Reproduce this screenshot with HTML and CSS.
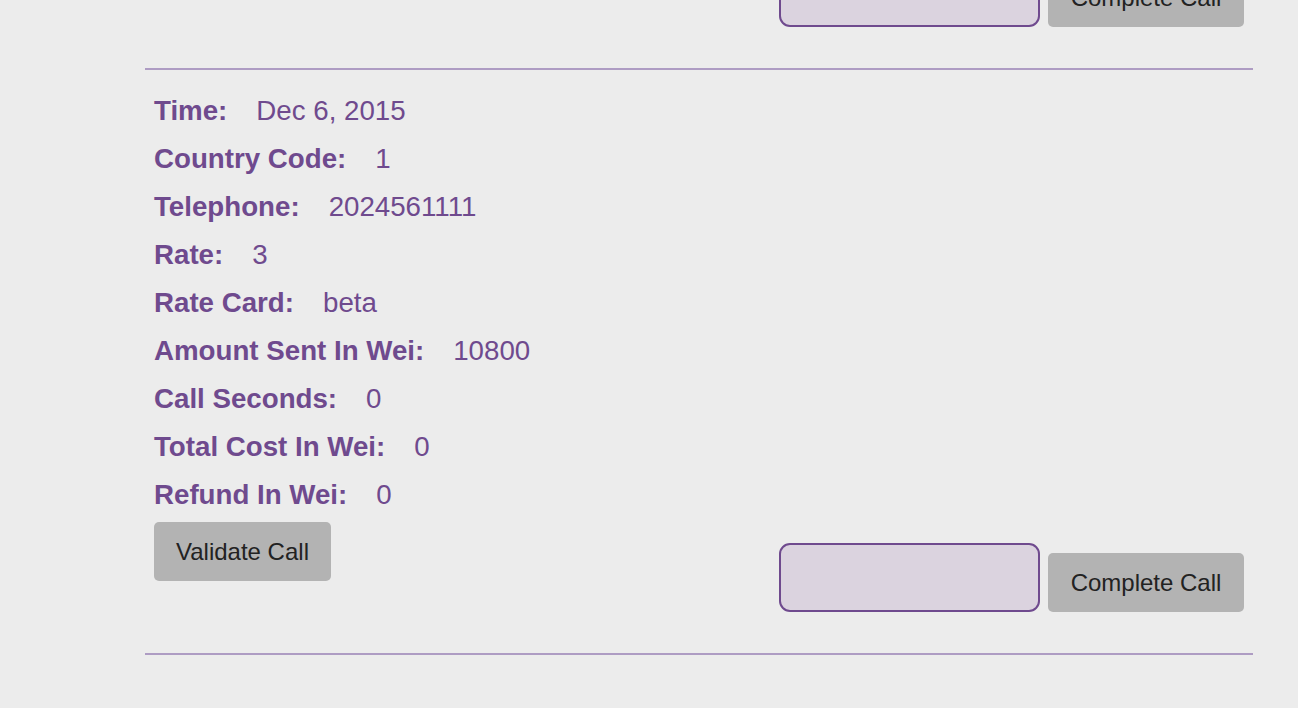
FILE: index.html
```html
<!DOCTYPE html>
<html>
<head>
<meta charset="utf-8">
<link rel="stylesheet" href="styles.css">
</head>
<body>
<div class="list">
  <div class="item item-tail">
    <div class="actions">
      <div></div>
      <div class="complete">
        <div class="field"></div>
        <button class="btn btn-complete">Complete Call</button>
      </div>
    </div>
  </div>
  <div class="item">
    <div class="row"><span class="label">Time:</span><span class="value">Dec 6, 2015</span></div>
    <div class="row"><span class="label">Country Code:</span><span class="value">1</span></div>
    <div class="row"><span class="label">Telephone:</span><span class="value">2024561111</span></div>
    <div class="row"><span class="label">Rate:</span><span class="value">3</span></div>
    <div class="row"><span class="label">Rate Card:</span><span class="value">beta</span></div>
    <div class="row"><span class="label">Amount Sent In Wei:</span><span class="value">10800</span></div>
    <div class="row"><span class="label">Call Seconds:</span><span class="value">0</span></div>
    <div class="row"><span class="label">Total Cost In Wei:</span><span class="value">0</span></div>
    <div class="row"><span class="label">Refund In Wei:</span><span class="value">0</span></div>
    <div class="actions">
      <button class="btn">Validate Call</button>
      <div class="complete">
        <div class="field"></div>
        <button class="btn btn-complete">Complete Call</button>
      </div>
    </div>
  </div>
</div>
</body>
</html>
```
FILE: styles.css
```css
html, body {
  margin: 0;
  padding: 0;
  background: #ececec;
}
body {
  font-family: "Liberation Sans", Arial, sans-serif;
  color: #6f4a8e;
}
.list {
  margin: 0 45px 0 145px;
}
.item {
  padding: 17px 9px 41px;
  border-bottom: 2px solid #ae9cc3;
}
.item-tail {
  padding-top: 0;
  height: 27px;
  overflow: hidden;
  display: flex;
  flex-direction: column;
  justify-content: flex-end;
}
.row {
  font-size: 27.7px;
  line-height: 48px;
  white-space: nowrap;
}
.label {
  font-weight: bold;
  margin-right: 29px;
}
.value {
  font-weight: normal;
}
.actions {
  display: flex;
  justify-content: space-between;
  align-items: flex-start;
  margin-top: 3px;
  height: 90px;
}
.item-tail .actions {
  flex: none;
  margin-top: 0;
}
.complete {
  display: flex;
  align-items: flex-end;
  gap: 8px;
  align-self: flex-end;
}
.btn {
  font-family: "Liberation Sans", Arial, sans-serif;
  font-size: 24px;
  color: #222;
  background: #b3b3b3;
  border: none;
  border-radius: 5px;
  height: 59px;
  padding: 0 22px;
  display: flex;
  align-items: center;
  justify-content: center;
}
.btn-complete {
  width: 196px;
}
.field {
  width: 257px;
  height: 65px;
  background: #dbd3df;
  border: 2px solid #6f4a8e;
  border-radius: 11px;
}
```
